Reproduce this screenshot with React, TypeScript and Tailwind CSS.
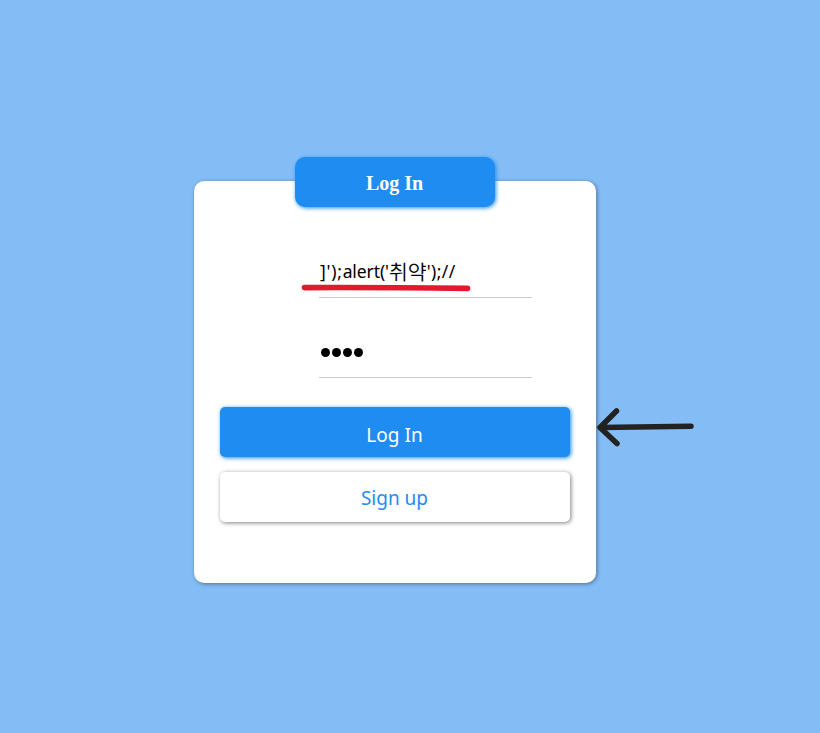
export default function App() {
  return (
    <main className="relative h-[733px] w-[820px] overflow-hidden bg-[#84bdf6] pt-[181px] pl-[194px] font-['Noto_Sans','Noto_Sans_CJK_KR',sans-serif]">
      <section className="flex h-[402px] w-[402px] flex-col rounded-[10px] bg-white px-[26px] shadow-[1px_1px_4px_rgba(0,0,0,0.4)]">
        <h1 className="-mt-6 ml-[75px] flex h-[50px] w-[200px] items-center justify-center rounded-[10px] bg-[#1e8cf1] pt-[2px] pr-px font-['Liberation_Serif',serif] text-[20px] font-bold text-white shadow-[1px_1px_4px_#1e8cf1]">
          Log In
        </h1>
        <div className="mt-[41px] ml-[99px] flex h-[50px] w-[213px] items-center border-b border-[#ccc] pb-[2px] pl-px text-[17.5px] whitespace-nowrap text-black">
          <span className="tracking-[0.75px]">]&apos;);</span>
          <span className="tracking-[-0.1px]">alert(&apos;</span>
          <span className="relative -top-px font-['Noto_Sans_CJK_KR',sans-serif] text-[20.5px] leading-6 font-[350]">취약</span>
          <span className="tracking-[0.45px]">&apos;);//</span>
        </div>
        <div className="mt-[30px] ml-[99px] flex h-[50px] w-[213px] items-center gap-[2.5px] border-b border-[#ccc] pl-[2px]" aria-label="Password">
          {[0, 1, 2, 3].map((dot) => (
            <span key={dot} className="size-[8.5px] rounded-full bg-black" />
          ))}
        </div>
        <button className="mt-[29px] flex h-[50px] w-[350px] shrink-0 items-center justify-center rounded-[5px] bg-[#1e8cf1] pt-[6px] pr-px text-[19px] text-white shadow-[1px_1px_4px_#1e8cf1]">
          Log In
        </button>
        <button className="mt-[15px] flex h-[50px] w-[350px] shrink-0 items-center justify-center rounded-[5px] bg-white pt-[3px] pr-px text-[19px] text-[#1e8cf1] shadow-[1px_1px_4px_rgba(0,0,0,0.5)]">
          Sign up
        </button>
      </section>
      <svg className="pointer-events-none absolute inset-0" width="820" height="733" fill="none" strokeLinecap="round" strokeLinejoin="round">
        <path d="M304.5 287.6 Q380 287.3 467.5 288.4" stroke="#e5192d" strokeWidth="5.6" />
        <path d="M691 426.2L600 427.5M616.5 411L600 427.5L617 443.5" stroke="#222" strokeWidth="5.5" />
        <path d="M600 427.5L606 423L606 432Z" fill="#222" />
      </svg>
    </main>
  );
}
